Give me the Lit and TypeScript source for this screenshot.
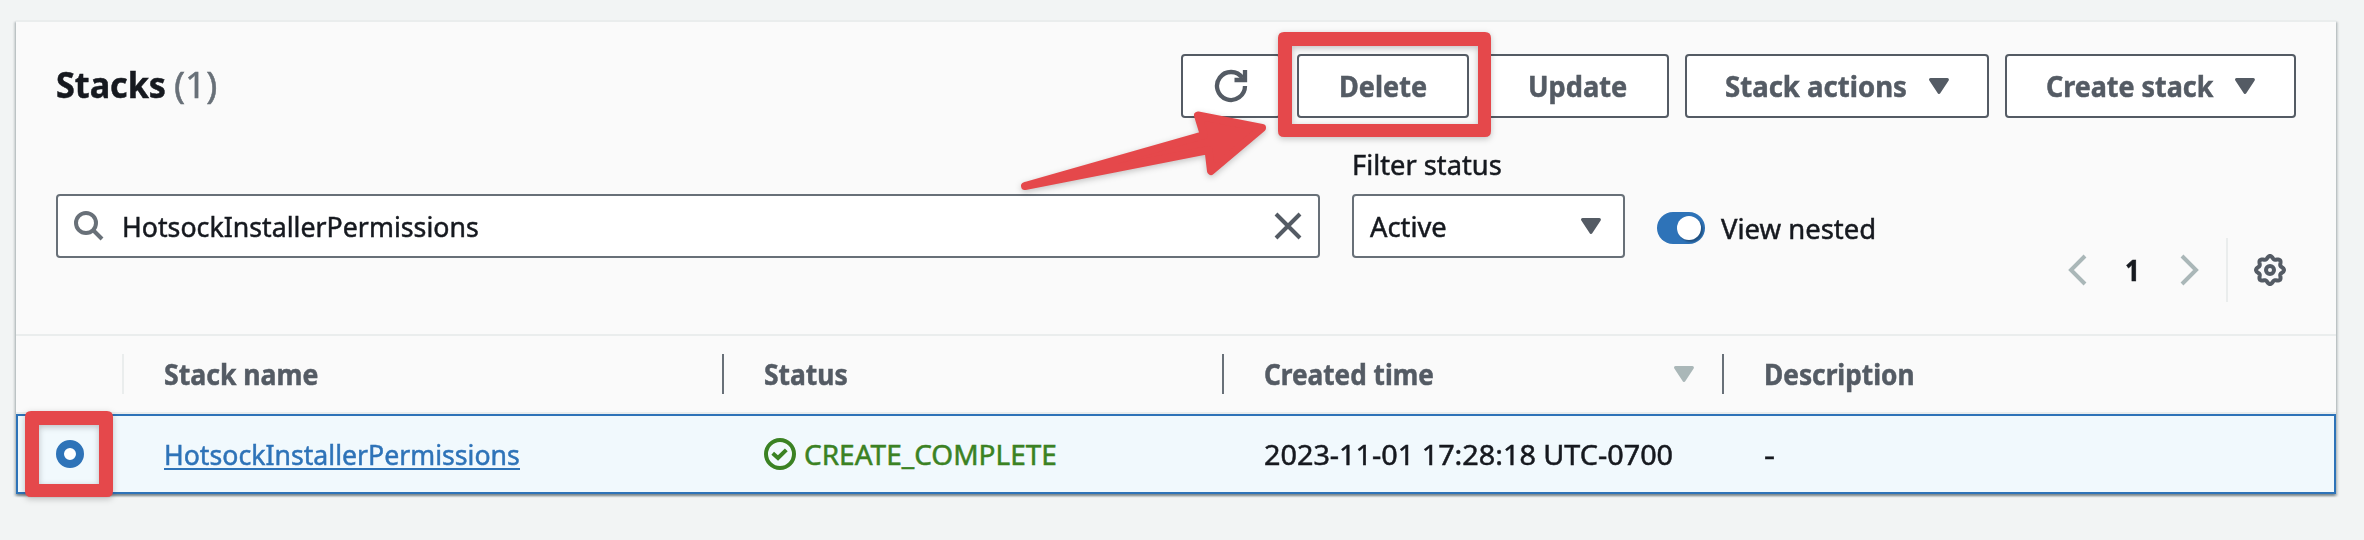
import { LitElement, html, css } from "lit";
import { customElement, property, query } from "lit/decorators.js";

/* Text run condensed horizontally to a given advance width. */
@customElement("fit-text")
class FitText extends LitElement {
  @property({ type: Number }) width = 0;
  @property() text = "";
  @query(".run") run!: HTMLElement;

  static styles = css`
    :host { display: inline-block; flex: none; white-space: nowrap; overflow: visible; }
    .box { display: block; }
    .run { display: inline-block; transform-origin: 0 50%; }
  `;

  updated() {
    const natural = this.run.offsetWidth;
    if (natural) this.run.style.transform = `scaleX(${this.width / natural})`;
  }

  render() {
    return html`<span class="box" style="width:${this.width}px"><span class="run">${this.text}</span></span>`;
  }
}

const t = (text: string, width: number) => html`<fit-text .text=${text} .width=${width}></fit-text>`;

const caret = html`<svg class="caret" width="20" height="16" viewBox="0 0 20 16">
  <path d="M1.600 1.600H18.400L10 14.400Z" fill="currentColor" stroke="currentColor" stroke-width="3" stroke-linejoin="round"/>
</svg>`;

/* Eight-lobed cog outline. */
const gearPath = (() => {
  const pts: string[] = [];
  for (let i = 0; i < 96; i++) {
    const a = (i * Math.PI) / 48;
    const r = 12.6 + 1.4 * Math.cos(8 * a);
    pts.push(`${(16 + r * Math.sin(a)).toFixed(2)} ${(16 - r * Math.cos(a)).toFixed(2)}`);
  }
  return `M${pts.join("L")}Z`;
})();

@customElement("app-root")
class AppRoot extends LitElement {
  static styles = css`
    :host {
      display: block; box-sizing: border-box; height: 540px; padding: 20px 28px 46px 16px;
      background: #f2f4f4; color: #16191f; position: relative; overflow: hidden;
      font: 28px/40px "Noto Sans", "Open Sans", sans-serif;
      -webkit-text-stroke: 0.5px currentColor;
    }
    * { box-sizing: border-box; }
    svg { display: block; flex: none; }
    .card {
      height: 474px; background: #fafafa; border-top: 2px solid #eaeded;
      box-shadow: 0 2px 2px rgba(0,28,36,.3), 2px 2px 2px rgba(0,28,36,.15), -2px 2px 2px rgba(0,28,36,.15);
    }
    .head { height: 312px; padding: 32px 40px 0; }
    .top { display: flex; justify-content: space-between; height: 64px; }
    h2 { margin: 0; font-size: 36px; line-height: 62px; font-weight: 700; display: flex; gap: 8px; }
    .count { color: #687078; font-weight: 400; }
    .actions { display: flex; gap: 16px; }
    .btn {
      height: 64px; border: 2px solid #545b64; border-radius: 4px; background: #fff; color: #545b64;
      font-weight: 700; display: flex; align-items: center; justify-content: center; gap: 22px;
    }
    .refresh { width: 100px; } .delete { width: 172px; } .update { width: 184px; }
    .stack { width: 304px; } .create { width: 291px; }
    .filters { display: flex; padding-top: 26px; }
    .search {
      width: 1264px; height: 64px; margin-top: 50px; padding: 0 16px; display: flex; align-items: center;
      border: 2px solid #687078; border-radius: 4px; background: #fff;
    }
    .search .value { flex: 1; padding-left: 18px; }
    .status { width: 273px; margin-left: 32px; }
    .label { display: flex; height: 50px; }
    .select {
      height: 64px; padding: 0 22px 0 16px; display: flex; align-items: center; justify-content: space-between;
      border: 2px solid #687078; border-radius: 4px; background: #fff;
    }
    .select .caret { color: #545b64; }
    .nested { display: flex; gap: 16px; align-items: center; height: 40px; margin: 64px 0 0 32px; }
    .toggle { width: 48px; height: 32px; border-radius: 16px; background: #2e73b8; display: flex; justify-content: flex-end; padding: 4px; }
    .knob { width: 24px; height: 24px; border-radius: 50%; background: #fff; box-shadow: 2px 2px 2px rgba(0,0,0,.3); }
    .pager { display: flex; align-items: center; margin: 94px 10px 0 auto; height: 64px; }
    .pager .num { font-weight: 700; margin: 0 40px 0 38px; }
    .pager .rule { width: 2px; height: 64px; background: #eaeded; margin: 0 26px 0 26px; }
    .row { display: grid; grid-template-columns: 106px 600px 500px 500px 1fr; height: 80px; align-items: center; }
    .columns { border-top: 2px solid #eaeded; border-bottom: 2px solid #eaeded; font-weight: 700; color: #545b64; }
    .th { height: 40px; padding-left: 40px; border-left: 2px solid #687078; display: flex; align-items: center; justify-content: space-between; padding-right: 28px; }
    .th.first { border-left-color: #eaeded; }
    .columns .caret { color: #aab7b8; }
    .item { border: 2px solid #2e73b8; background: #f1f9fd; grid-template-columns: 104px 600px 500px 500px 1fr; }
    .td { padding-left: 42px; display: flex; align-items: center; }
    .pick { padding-left: 38px; }
    .radio { width: 28px; height: 28px; border: 8px solid #2e73b8; border-radius: 50%; background: #fff; }
    .link { color: #2e73b8; height: 40px; background: linear-gradient(#2e73b8, #2e73b8) 0 34px / 100% 2px no-repeat; }
    .ok { color: #3b8223; gap: 8px; }
    .marks { position: absolute; left: 0; top: 0; filter: drop-shadow(0 2px 3px rgba(0,0,0,.22)); }
  `;

  render() {
    return html`
      <section class="card">
        <div class="head">
          <div class="top">
            <h2>${t("Stacks", 110)}<span class="count">${t("(1)", 43)}</span></h2>
            <div class="actions">
              <div class="btn refresh"><svg width="34" height="34" viewBox="0 0 34 34" fill="none" stroke="#545b64" stroke-width="4.300">
                <path d="M31 17A14 14 0 1 1 28.500 9"/><path d="M31 1V11H20.500"/></svg></div>
              <div class="btn delete">${t("Delete", 88)}</div>
              <div class="btn update">${t("Update", 99)}</div>
              <div class="btn stack">${t("Stack actions", 182)}${caret}</div>
              <div class="btn create">${t("Create stack", 167)}${caret}</div>
            </div>
          </div>
          <div class="filters">
            <div class="search">
              <svg width="30" height="30" viewBox="0 0 30 30" fill="none" stroke="#687078" stroke-width="4"><circle cx="12" cy="12" r="10"/><path d="M19 19L28 28"/></svg>
              <span class="value">${t("HotsockInstallerPermissions", 357)}</span>
              <svg width="28" height="28" viewBox="0 0 28 28" stroke="#545b64" stroke-width="4"><path d="M2 2L26 26M26 2L2 26"/></svg>
            </div>
            <div class="status">
              <div class="label">${t("Filter status", 150)}</div>
              <div class="select">${t("Active", 77)}${caret}</div>
            </div>
            <div class="nested"><span class="toggle"><span class="knob"></span></span>${t("View nested", 155)}</div>
            <div class="pager">
              <svg width="20" height="32" viewBox="0 0 20 32" fill="none" stroke="#aab7b8" stroke-width="4"><path d="M18 2L4 16L18 30"/></svg>
              <span class="num">${t("1", 15)}</span>
              <svg width="20" height="32" viewBox="0 0 20 32" fill="none" stroke="#aab7b8" stroke-width="4"><path d="M2 2L16 16L2 30"/></svg>
              <span class="rule"></span>
              <svg width="32" height="32" viewBox="0 0 32 32" fill="none" stroke="#545b64" stroke-width="4" stroke-linejoin="round"><path d=${gearPath}/><circle cx="16" cy="16" r="4"/></svg>
            </div>
          </div>
        </div>
        <div class="row columns">
          <span></span>
          <div class="th first">${t("Stack name", 154)}</div>
          <div class="th">${t("Status", 84)}</div>
          <div class="th">${t("Created time", 170)}${caret}</div>
          <div class="th">${t("Description", 151)}</div>
        </div>
        <div class="row item">
          <div class="pick"><div class="radio"></div></div>
          <div class="td"><span class="link">${t("HotsockInstallerPermissions", 356)}</span></div>
          <div class="td ok"><svg width="32" height="32" viewBox="0 0 32 32" fill="none" stroke="#3b8223" stroke-width="4"><circle cx="16" cy="16" r="14"/><path d="M8.700 15.300L14 20L22.300 11.800"/></svg>${t("CREATE_COMPLETE", 253)}</div>
          <div class="td">${t("2023-11-01 17:28:18 UTC-0700", 409)}</div>
          <div class="td">${t("-", 11)}</div>
        </div>
      </section>
      <svg class="marks" width="2364" height="540" viewBox="0 0 2364 540" stroke-linejoin="round">
        <g fill="#e5484b" fill-rule="evenodd">
          <path d="M1284 32H1485Q1491 32 1491 38V131Q1491 137 1485 137H1284Q1278 137 1278 131V38Q1278 32 1284 32ZM1292 46V124H1478V46Z"/>
          <path d="M31 411H107Q113 411 113 417V491Q113 497 107 497H31Q25 497 25 491V417Q25 411 31 411ZM39 425V484H99V425Z"/>
          <path stroke="#e5484b" stroke-width="8" d="M1025 186L1204 135L1198 115.500L1262 128L1211 171L1208.500 150Z"/>
        </g>
      </svg>`;
  }
}
